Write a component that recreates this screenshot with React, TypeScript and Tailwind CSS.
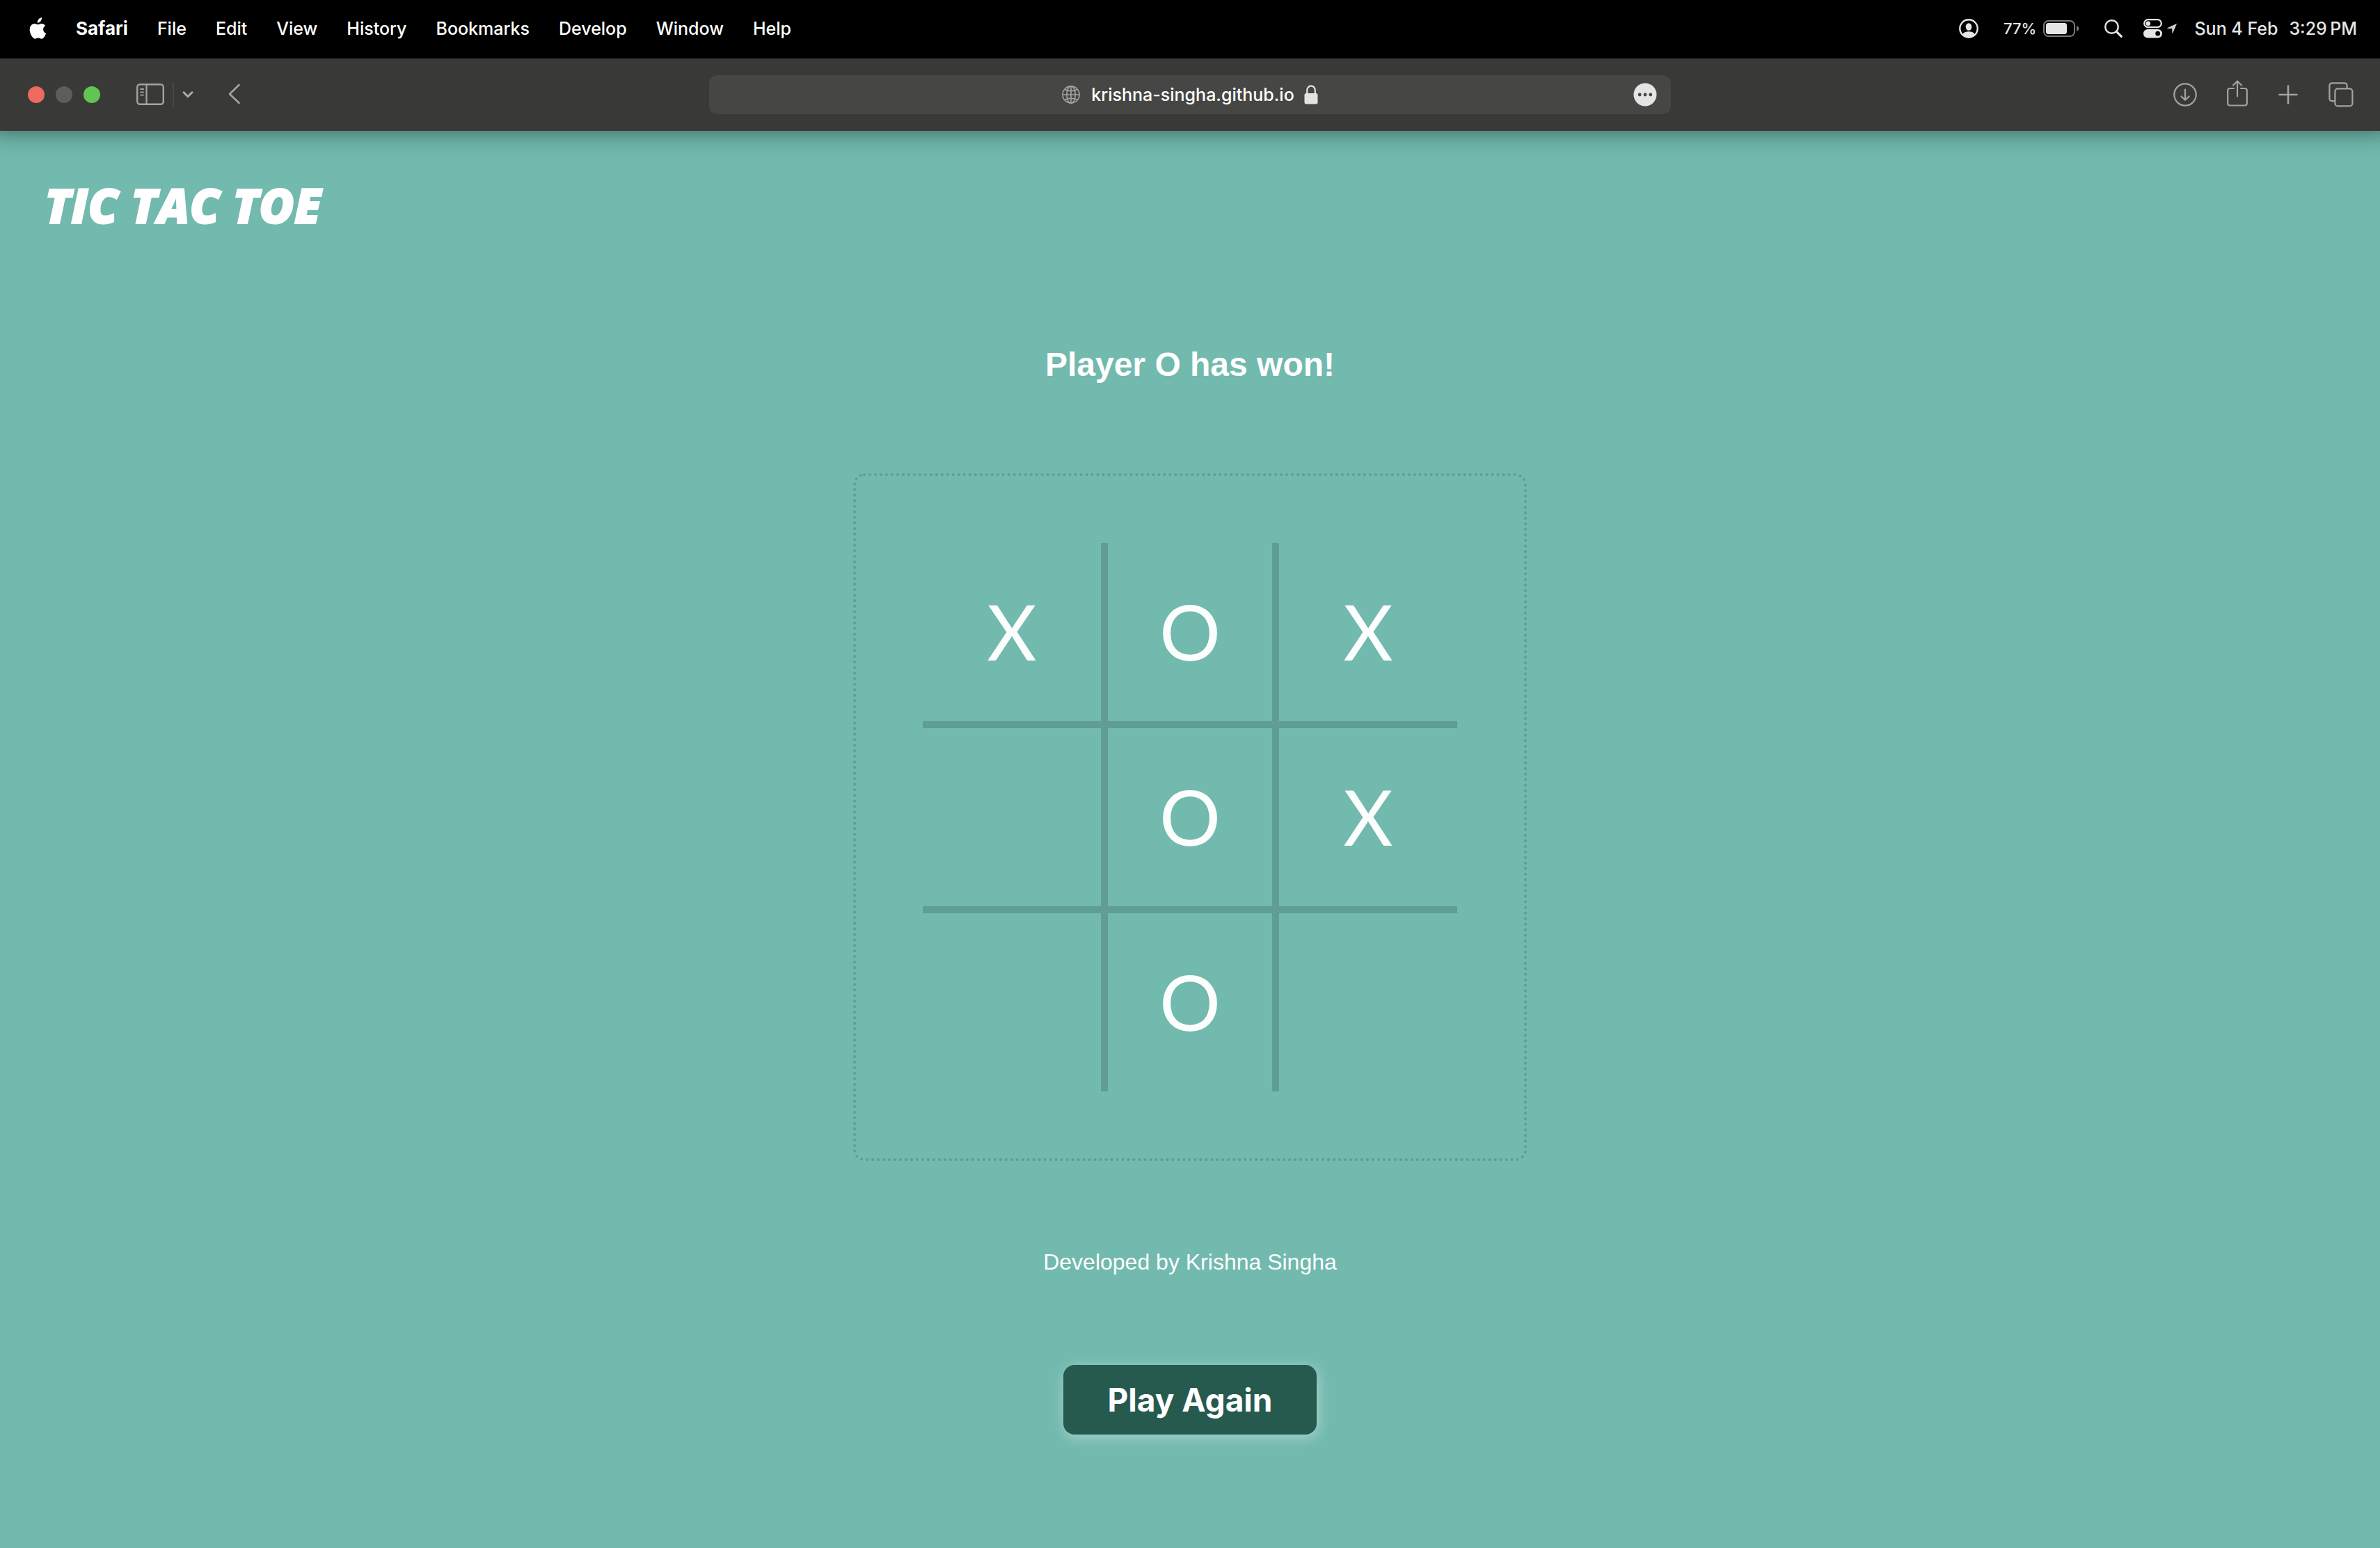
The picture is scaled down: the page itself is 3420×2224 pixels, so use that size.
import { useState } from "react";

const MENUS = ["File", "Edit", "View", "History", "Bookmarks", "Develop", "Window", "Help"];

const START = ["X", "O", "X", "", "O", "X", "", "O", ""];

function AppleLogo() {
  return (
    <svg viewBox="0 0 26 32" className="h-8 w-[26px]" fill="#fff" aria-hidden="true">
      <path d="M21.600 17.100c0-3.200 2.600-4.700 2.700-4.800-1.500-2.100-3.800-2.400-4.600-2.500-1.900-.2-3.800 1.200-4.800 1.200s-2.500-1.100-4.100-1.100c-2.100 0-4.100 1.200-5.200 3.100-2.200 3.900-.6 9.600 1.600 12.700 1.100 1.500 2.300 3.300 4 3.200 1.600-.1 2.200-1 4.100-1s2.500 1 4.200 1c1.700 0 2.800-1.600 3.900-3.100 1.200-1.800 1.700-3.500 1.700-3.600-.1 0-3.500-1.300-3.500-5.100z" transform="translate(-3.500 -2.200) scale(1.140)" />
      <path d="M19 .3c.2 1.900-.5 3.700-1.600 5.100s-2.900 2.400-4.700 2.200c-.2-1.800.7-3.700 1.700-4.900C15.500 1.300 17.400.4 19 .3z" />
    </svg>
  );
}

function UserIcon() {
  return (
    <svg viewBox="0 0 28 28" className="size-7" aria-hidden="true">
      <circle cx="14" cy="14" r="12.700" fill="none" stroke="#e6e6e6" strokeWidth="2.400" />
      <ellipse cx="14" cy="11.500" rx="4.300" ry="5.200" fill="#e6e6e6" />
      <path d="M5 22.500c1.500-3 5-4.300 9-4.300s7.500 1.300 9 4.300A12 12 0 0 1 14 26.500a12 12 0 0 1-9-4z" fill="#e6e6e6" />
    </svg>
  );
}

function BatteryIcon() {
  return (
    <svg viewBox="0 0 52 24" className="h-6 w-[52px]" aria-hidden="true">
      <rect x="1" y="1" width="44" height="22" rx="6.500" fill="none" stroke="#7a7a7a" strokeWidth="2" />
      <rect x="4" y="4" width="30" height="16" rx="3.500" fill="#e6e6e6" />
      <path d="M48 8c2 .6 3.300 2.200 3.300 4S50 15.400 48 16z" fill="#7a7a7a" />
    </svg>
  );
}

function SearchIcon() {
  return (
    <svg viewBox="0 0 26 26" className="size-[26px]" fill="none" stroke="#e6e6e6" aria-hidden="true">
      <circle cx="10.500" cy="10.500" r="9.300" strokeWidth="2.400" />
      <path d="M17.300 17.300l7 7" strokeWidth="3.200" strokeLinecap="round" />
    </svg>
  );
}

function ControlCenterIcon() {
  return (
    <svg viewBox="0 0 27 28" className="h-7 w-[27px]" aria-hidden="true">
      <rect x="1.200" y="1.200" width="24.600" height="11" rx="5.500" fill="none" stroke="#e6e6e6" strokeWidth="2.200" />
      <circle cx="6.800" cy="6.700" r="3.300" fill="#e6e6e6" />
      <rect x="0" y="15" width="27" height="12.500" rx="6.250" fill="#e6e6e6" />
      <circle cx="20.700" cy="21.200" r="3.400" fill="#000" />
    </svg>
  );
}

function LocationIcon() {
  return (
    <svg viewBox="0 0 14 14" className="size-[14px]" fill="#d0d0d0" aria-hidden="true">
      <path d="M13.800.5L8.300 13.300c-.3.600-1 .400-1-.200V7H1C.3 7 .1 6.200.7 5.900L13.200.2c.4-.2.8-.1.600.3z" />
    </svg>
  );
}

function SidebarIcon() {
  return (
    <svg viewBox="0 0 40 31" className="h-[31px] w-10" fill="none" stroke="#a3a3a2" aria-hidden="true">
      <rect x="1.200" y="1.200" width="37.600" height="28.600" rx="4" strokeWidth="2.400" />
      <path d="M14.500 1.500v28" strokeWidth="2.200" />
      <path d="M6 8h4.200M6 12.300h4.200M6 16.600h4.200" strokeWidth="1.800" strokeLinecap="round" />
    </svg>
  );
}

function GlobeIcon() {
  return (
    <svg viewBox="0 0 26 26" className="size-[26px]" fill="none" stroke="#a3a3a2" strokeWidth="1.600" aria-hidden="true">
      <circle cx="13" cy="13" r="12.100" />
      <ellipse cx="13" cy="13" rx="6.200" ry="12.100" />
      <path d="M13 1v24M1 13h24M4 5.500c5 3 13 3 18 0M4 20.500c5-3 13-3 18 0" />
    </svg>
  );
}

function LockIcon() {
  return (
    <svg viewBox="0 0 20 28" className="h-7 w-5" aria-hidden="true">
      <path d="M4.200 13V8a5.800 6.600 0 0 1 11.600 0v5" fill="none" stroke="#e3e3e3" strokeWidth="2.200" />
      <rect x=".5" y="12" width="19" height="15.500" rx="2.500" fill="#e3e3e3" />
    </svg>
  );
}

function MoreIcon() {
  return (
    <svg viewBox="0 0 34 34" className="size-[34px]" aria-hidden="true">
      <circle cx="17" cy="17" r="16.500" fill="#e4e4e4" />
      <circle cx="9.200" cy="17" r="2.400" fill="#444" />
      <circle cx="17" cy="17" r="2.400" fill="#444" />
      <circle cx="24.800" cy="17" r="2.400" fill="#444" />
    </svg>
  );
}

function DownloadIcon() {
  return (
    <svg viewBox="0 0 34 34" className="size-[34px]" fill="none" stroke="#a3a3a2" strokeWidth="2.200" strokeLinecap="round" strokeLinejoin="round" aria-hidden="true">
      <circle cx="17" cy="17" r="15.700" />
      <path d="M17 9.500v15M11.500 19.500l5.500 5.300 5.500-5.300" />
    </svg>
  );
}

function ShareIcon() {
  return (
    <svg viewBox="0 0 30 38" className="h-[38px] w-[30px]" fill="none" stroke="#a3a3a2" strokeWidth="2.200" strokeLinecap="round" strokeLinejoin="round" aria-hidden="true">
      <path d="M10 12H4.500Q1.200 12 1.200 15.300V33.200Q1.200 36.500 4.500 36.500H25.500Q28.800 36.500 28.800 33.200V15.300Q28.800 12 25.500 12H20" />
      <path d="M15 23.500V2M9 7.500L15 1.500l6 6" />
    </svg>
  );
}

function PlusIcon() {
  return (
    <svg viewBox="0 0 28 28" className="size-7" stroke="#a3a3a2" strokeWidth="2.600" strokeLinecap="round" aria-hidden="true">
      <path d="M14 1.500v25M1.500 14h25" />
    </svg>
  );
}

function TabsIcon() {
  return (
    <svg viewBox="0 0 36 36" className="size-9" fill="none" stroke="#a3a3a2" strokeWidth="2.200" aria-hidden="true">
      <rect x="9.400" y="9.400" width="25" height="25" rx="4" />
      <path d="M9 27.200H5.500Q1.400 27.200 1.400 23.200V5.500Q1.400 1.400 5.500 1.400H22.500Q26.600 1.400 26.600 5.500V9" />
    </svg>
  );
}

function MenuBar() {
  return (
    <nav className="relative z-20 flex h-[84px] items-center justify-between bg-black pr-[33px] pb-0.5 pl-[41px] text-[25px] leading-8 font-medium text-white">
      <div className="flex items-center gap-[42px]">
        <button aria-label="Apple menu"><AppleLogo /></button>
        <button className="text-[26px] font-bold">Safari</button>
        {MENUS.map((name) => (
          <button key={name}>{name}</button>
        ))}
      </div>
      <div className="flex items-center text-[#e6e6e6]">
        <button aria-label="Account" className="mr-9"><UserIcon /></button>
        <button className="mr-9 flex items-center gap-[10px] text-[22px]">
          77% <BatteryIcon />
        </button>
        <button aria-label="Search" className="mr-[30px]"><SearchIcon /></button>
        <button aria-label="Control center" className="mr-[7px]"><ControlCenterIcon /></button>
        <span className="mr-[25px]"><LocationIcon /></span>
        <button className="flex gap-4"><span>Sun 4 Feb</span><span>3:29{"\u2009"}PM</span></button>
      </div>
    </nav>
  );
}

function Toolbar() {
  return (
    <header className="relative z-10 grid h-[104px] grid-cols-[minmax(0,1019fr)_minmax(0,1382fr)_minmax(0,1019fr)] items-center bg-[#393937] shadow-[0_-16px_32px_16px_rgba(0,0,0,0.5)]">
      <div className="flex items-center pl-10">
        <div className="flex gap-4">
          <button aria-label="Close" className="size-6 rounded-full bg-[#ed6a5e]" />
          <button aria-label="Minimize" className="size-6 rounded-full bg-[#5d5d5b]" />
          <button aria-label="Zoom" className="size-6 rounded-full bg-[#61c554]" />
        </div>
        <button aria-label="Sidebar" className="ml-[52px] pb-0.5"><SidebarIcon /></button>
        <span className="ml-3 h-9 w-[2px] bg-[#474745]" />
        <button aria-label="Tab groups" className="ml-3">
          <svg viewBox="0 0 16 10" className="h-[10px] w-4" fill="none" stroke="#b0b0af" strokeWidth="2.800" strokeLinecap="round" strokeLinejoin="round" aria-hidden="true">
            <path d="M2 1.800l6 6 6-6" />
          </svg>
        </button>
        <button aria-label="Back" className="ml-[50px] pb-0.5">
          <svg viewBox="0 0 18 30" className="h-[30px] w-[18px]" fill="none" stroke="#a3a3a2" strokeWidth="2.600" strokeLinecap="round" strokeLinejoin="round" aria-hidden="true">
            <path d="M15.500 2L2 15l13.500 13" />
          </svg>
        </button>
      </div>
      <div className="flex h-14 items-center rounded-xl bg-[#464644] pr-5 pl-[54px]">
        <div className="flex flex-1 items-center justify-center">
          <GlobeIcon />
          <input
            aria-label="Address"
            defaultValue="krishna-singha.github.io"
            className="mr-[14px] ml-4 field-sizing-content text-[25px] leading-8 font-medium text-white outline-none"
          />
          <LockIcon />
        </div>
        <button aria-label="Page menu"><MoreIcon /></button>
      </div>
      <div className="flex items-center justify-end pr-[38px]">
        <button aria-label="Downloads" className="mr-[43px]"><DownloadIcon /></button>
        <button aria-label="Share" className="mr-11 pb-1"><ShareIcon /></button>
        <button aria-label="New tab" className="mr-11"><PlusIcon /></button>
        <button aria-label="Tab overview"><TabsIcon /></button>
      </div>
    </header>
  );
}

function Board({ cells }: { cells: string[] }) {
  return (
    <div className="rounded-2xl border-4 border-dotted border-[#609d93] p-24">
      <div className="grid grid-cols-[256px_256px_256px] grid-rows-[256px_276px_256px]">
        {cells.map((mark, i) => (
          <button
            key={i}
            aria-label={`Cell ${i + 1}`}
            className={`flex items-center justify-center border-[#609d93] pb-1 font-[Lato] text-[110px] leading-none text-[#fcfefe] ${
              i % 3 === 1 ? "border-x-[10px]" : ""
            } ${i > 2 && i < 6 ? "border-y-[10px]" : ""}`}
          >
            {mark}
          </button>
        ))}
      </div>
    </div>
  );
}

export default function App() {
  const [cells, setCells] = useState(START);
  return (
    <div className="min-h-screen bg-[#72b9ae] font-[Inter,sans-serif]">
      <MenuBar />
      <Toolbar />
      <h1 className="px-16 pt-[70px] font-['Open_Sans',sans-serif] text-[69px] leading-[72px] font-extrabold text-white italic [-webkit-text-stroke:2px_white]">TIC TAC TOE</h1>
      <main className="flex flex-col items-center pt-[162px] pb-32 font-['Liberation_Sans',Arial,sans-serif] text-white">
        <h2 className="text-5xl leading-[64px] font-bold">Player O has won!</h2>
        <div className="pt-[124px]">
          <Board cells={cells} />
        </div>
        <p className="pt-[124px] text-[32px] leading-[42px]">Developed by Krishna Singha</p>
        <button
          onClick={() => setCells(START)}
          className="mt-[127px] rounded-2xl bg-[#265a4e] px-16 py-5 font-[Inter,sans-serif] text-[46px] leading-[60px] font-bold shadow-[2px_4px_20px_rgba(255,255,255,0.4)]"
        >
          Play Again
        </button>
      </main>
    </div>
  );
}
